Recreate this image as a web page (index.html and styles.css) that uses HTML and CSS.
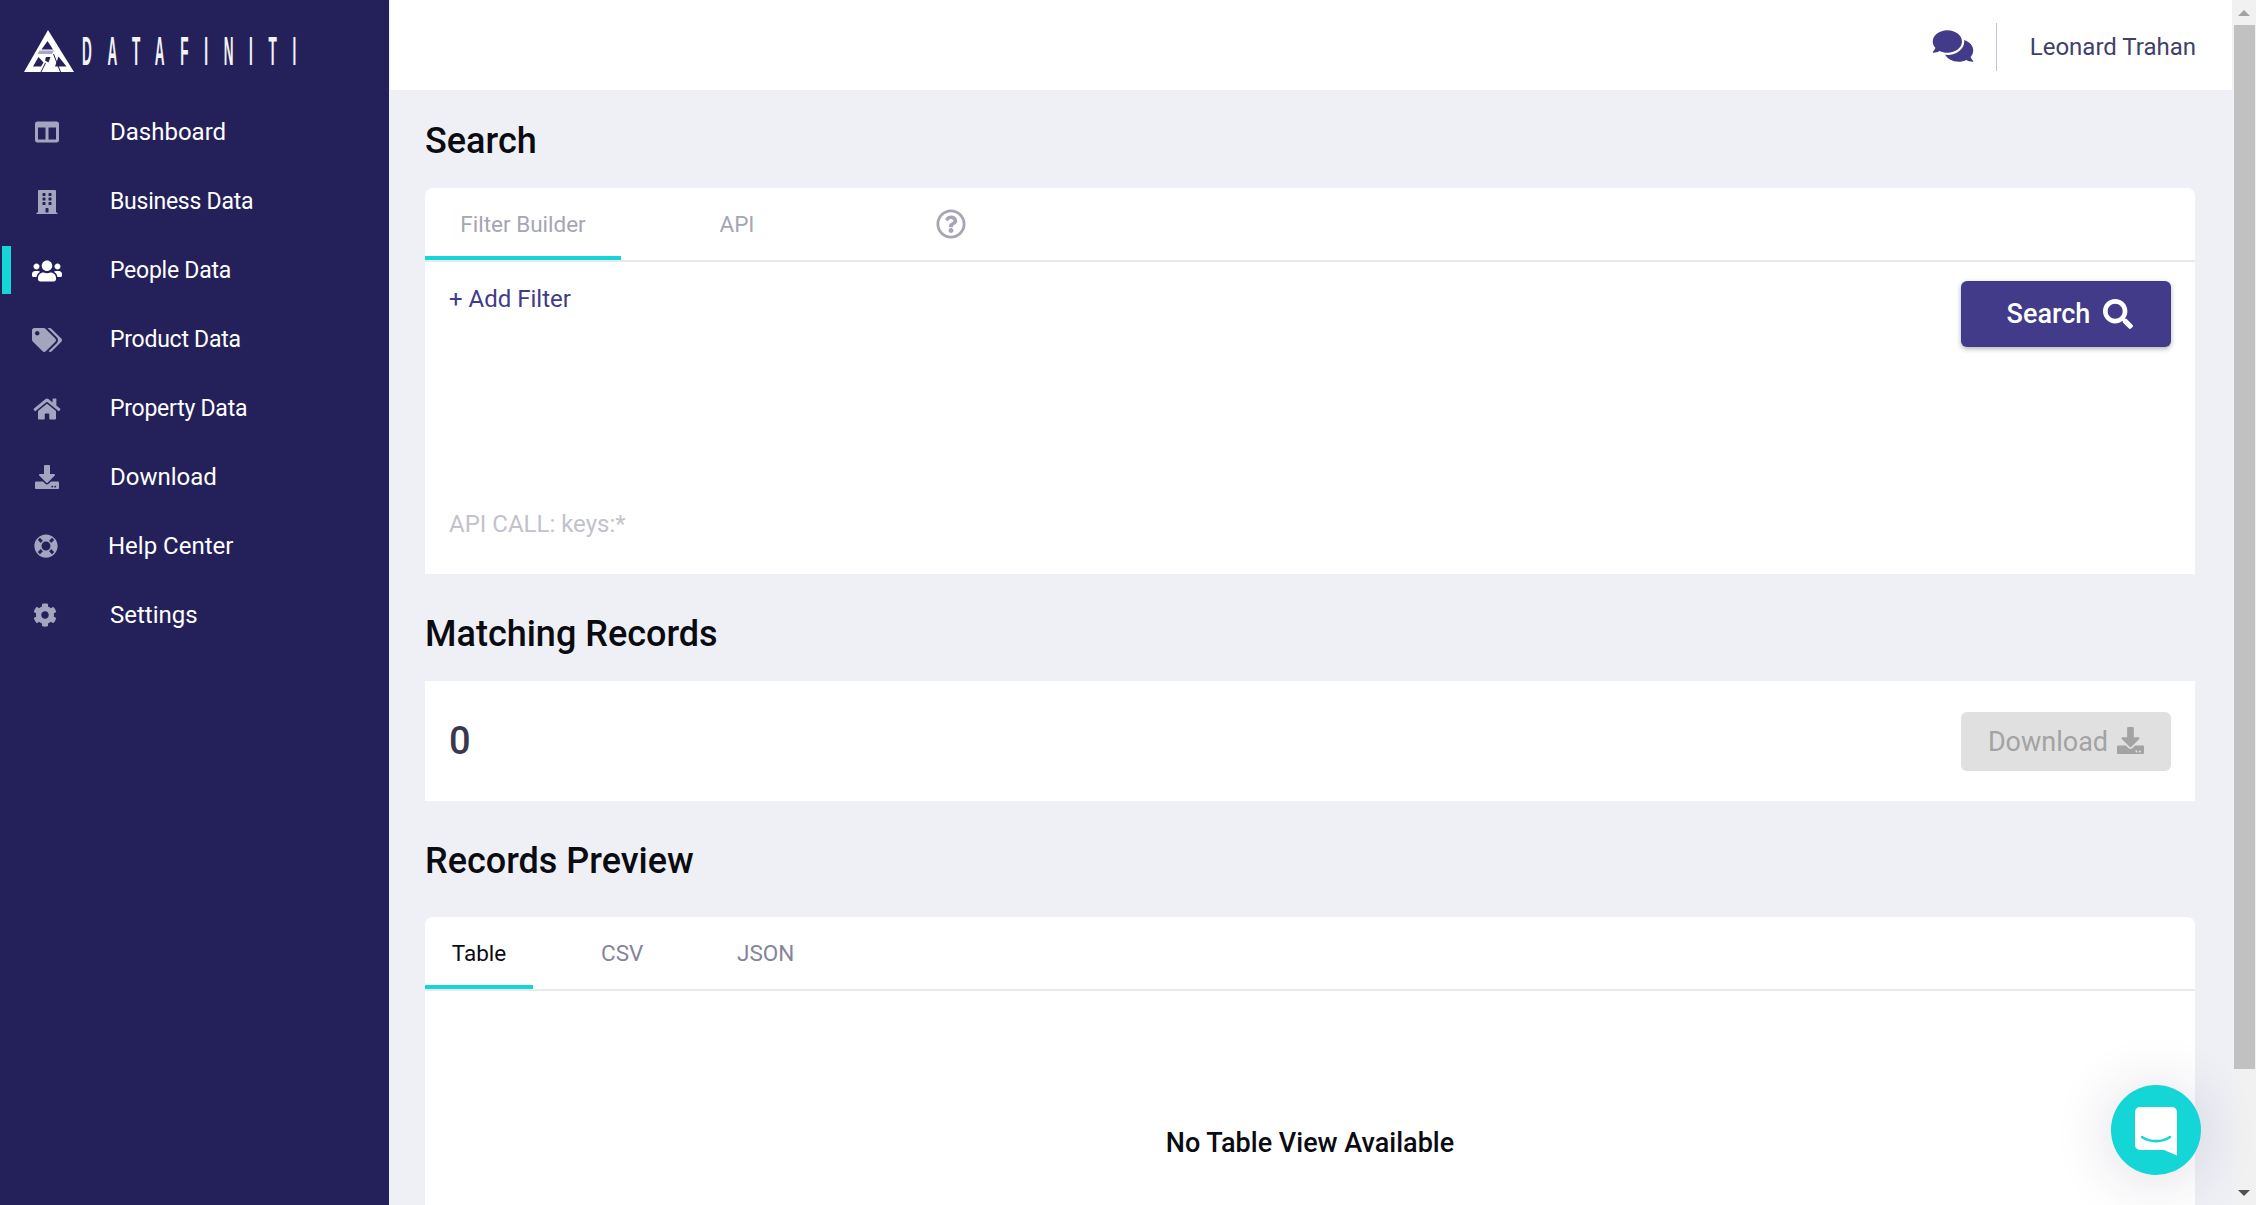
FILE: index.html
```html
<!DOCTYPE html>
<html lang="en">
<head>
    <meta charset="UTF-8">
    <meta name="viewport" content="width=device-width, initial-scale=1.0">
    <title>Datafiniti</title>
    <link rel="stylesheet" href="styles.css">
</head>
<body>
    <aside class="sidebar">
        <div class="logo">
            <svg class="logo-mark" viewBox="0 0 50 42">
                <path fill="#fff" fill-rule="evenodd" d="M24 0L50 42H0zM23.5 11L17.5 19.5H29zM14.5 27L9 36.5H17L19.5 32.5zM34.5 26.5L31 36.5H42.5zM22 27L21 30.5L24.5 32.5L26.5 27z"/>
                <path fill="#a9a8c4" d="M15.5 20.5H30L28 24H13.5z"/>
                <path fill="none" stroke="#24215a" stroke-width="1" d="M17 42L21.5 33M29.5 24L36.5 42"/>
            </svg>
            <span class="logo-text">DATAFINITI</span>
        </div>
        <nav class="nav">
            <a class="nav-item"><svg class="nav-icon" viewBox="0 0 512 512"><path d="M464 32H48C21.49 32 0 53.49 0 80v352c0 26.51 21.49 48 48 48h416c26.51 0 48-21.49 48-48V80c0-26.51-21.49-48-48-48zM224 416H64V160h160v256zm224 0H288V160h160v256z"/></svg>Dashboard</a>
            <a class="nav-item nav-data"><svg class="nav-icon" viewBox="0 0 448 512"><path d="M436 480h-20V24c0-13.255-10.745-24-24-24H56C42.745 0 32 10.745 32 24v456H12c-6.627 0-12 5.373-12 12v20h448v-20c0-6.627-5.373-12-12-12zM128 76c0-6.627 5.373-12 12-12h40c6.627 0 12 5.373 12 12v40c0 6.627-5.373 12-12 12h-40c-6.627 0-12-5.373-12-12V76zm0 96c0-6.627 5.373-12 12-12h40c6.627 0 12 5.373 12 12v40c0 6.627-5.373 12-12 12h-40c-6.627 0-12-5.373-12-12v-40zm52 148h-40c-6.627 0-12-5.373-12-12v-40c0-6.627 5.373-12 12-12h40c6.627 0 12 5.373 12 12v40c0 6.627-5.373 12-12 12zm76 160h-64v-84c0-6.627 5.373-12 12-12h40c6.627 0 12 5.373 12 12v84zm64-172c0 6.627-5.373 12-12 12h-40c-6.627 0-12-5.373-12-12v-40c0-6.627 5.373-12 12-12h40c6.627 0 12 5.373 12 12v40zm0-96c0 6.627-5.373 12-12 12h-40c-6.627 0-12-5.373-12-12v-40c0-6.627 5.373-12 12-12h40c6.627 0 12 5.373 12 12v40zm0-96c0 6.627-5.373 12-12 12h-40c-6.627 0-12-5.373-12-12V76c0-6.627 5.373-12 12-12h40c6.627 0 12 5.373 12 12v40z"/></svg>Business Data</a>
            <a class="nav-item nav-data active"><svg class="nav-icon" viewBox="0 0 640 512"><path d="M96 224c35.3 0 64-28.7 64-64s-28.7-64-64-64-64 28.7-64 64 28.7 64 64 64zm448 0c35.3 0 64-28.7 64-64s-28.7-64-64-64-64 28.7-64 64 28.7 64 64 64zm32 32h-64c-17.6 0-33.5 7.1-45.1 18.6 40.3 22.1 68.9 62 75.1 109.4h66c17.7 0 32-14.3 32-32v-32c0-35.3-28.7-64-64-64zm-256 0c61.9 0 112-50.1 112-112S381.9 32 320 32 208 82.1 208 144s50.1 112 112 112zm76.8 32h-8.3c-20.8 10-43.9 16-68.5 16s-47.6-6-68.5-16h-8.3C179.6 288 128 339.6 128 403.2V432c0 26.5 21.5 48 48 48h288c26.5 0 48-21.5 48-48v-28.8c0-63.6-51.6-115.2-115.2-115.2zm-223.7-13.4C161.5 263.1 145.6 256 128 256H64c-35.3 0-64 28.7-64 64v32c0 17.7 14.3 32 32 32h65.9c6.3-47.4 34.9-87.3 75.2-109.4z"/></svg>People Data</a>
            <a class="nav-item nav-data"><svg class="nav-icon" viewBox="0 0 640 512"><path d="M497.941 225.941L286.059 14.059A48 48 0 0 0 252.118 0H48C21.49 0 0 21.49 0 48v204.118a48 48 0 0 0 14.059 33.941l211.882 211.882c18.744 18.745 49.136 18.746 67.882 0l204.118-204.118c18.745-18.745 18.745-49.137 0-67.882zM112 160c-26.51 0-48-21.49-48-48s21.49-48 48-48 48 21.49 48 48-21.49 48-48 48zm513.941 133.823L421.823 497.941c-18.745 18.745-49.137 18.745-67.882 0l-.36-.36L527.64 323.522c16.999-16.999 26.36-39.6 26.36-63.64s-9.362-46.641-26.36-63.64L331.397 0h48.721a48 48 0 0 1 33.941 14.059l211.882 211.882c18.745 18.745 18.745 49.137 0 67.882z"/></svg>Product Data</a>
            <a class="nav-item nav-data"><svg class="nav-icon" viewBox="0 0 576 512"><path d="M280.37 148.26L96 300.11V464a16 16 0 0 0 16 16l112.06-.29a16 16 0 0 0 15.92-16V368a16 16 0 0 1 16-16h64a16 16 0 0 1 16 16v95.64a16 16 0 0 0 16 16.05L464 480a16 16 0 0 0 16-16V300L295.67 148.26a12.19 12.19 0 0 0-15.3 0zM571.6 251.47L488 182.56V44.05a12 12 0 0 0-12-12h-56a12 12 0 0 0-12 12v72.61L318.47 43a48 48 0 0 0-61 0L4.34 251.47a12 12 0 0 0-1.6 16.9l25.5 31A12 12 0 0 0 45.15 301l235.22-193.74a12.19 12.19 0 0 1 15.3 0L530.9 301a12 12 0 0 0 16.9-1.6l25.5-31a12 12 0 0 0-1.7-16.93z"/></svg>Property Data</a>
            <a class="nav-item"><svg class="nav-icon" viewBox="0 0 512 512"><path d="M216 0h80c13.3 0 24 10.7 24 24v168h87.7c17.8 0 26.7 21.5 14.1 34.1L269.7 378.3c-7.5 7.5-19.8 7.5-27.3 0L90.1 226.1c-12.6-12.6-3.7-34.1 14.1-34.1H192V24c0-13.3 10.7-24 24-24zm296 376v112c0 13.3-10.7 24-24 24H24c-13.3 0-24-10.7-24-24V376c0-13.3 10.7-24 24-24h146.7l49 49c20.1 20.1 52.5 20.1 72.6 0l49-49H488c13.3 0 24 10.7 24 24zm-124 88c0-11-9-20-20-20s-20 9-20 20 9 20 20 20 20-9 20-20zm64 0c0-11-9-20-20-20s-20 9-20 20 9 20 20 20 20-9 20-20z"/></svg>Download</a>
            <a class="nav-item help"><svg class="nav-icon" viewBox="0 0 512 512"><path d="M256 8C119.033 8 8 119.033 8 256s111.033 248 248 248 248-111.033 248-248S392.967 8 256 8zm173.696 119.559l-63.399 63.399c-10.987-18.559-26.67-34.252-45.255-45.255l63.399-63.399a218.396 218.396 0 0 1 45.255 45.255zM256 352c-53.019 0-96-42.981-96-96s42.981-96 96-96 96 42.981 96 96-42.981 96-96 96zM127.559 82.304l63.399 63.399c-18.559 10.987-34.252 26.67-45.255 45.255l-63.399-63.399a218.372 218.372 0 0 1 45.255-45.255zM82.304 384.441l63.399-63.399c10.987 18.559 26.67 34.252 45.255 45.255l-63.399 63.399a218.396 218.396 0 0 1-45.255-45.255zm302.137 45.255l-63.399-63.399c18.559-10.987 34.252-26.67 45.255-45.255l63.399 63.399a218.403 218.403 0 0 1-45.255 45.255z"/></svg>Help Center</a>
            <a class="nav-item settings"><svg class="nav-icon" viewBox="0 0 512 512"><path d="M487.4 315.7l-42.6-24.6c4.3-23.2 4.3-47 0-70.2l42.6-24.6c4.9-2.8 7.1-8.6 5.5-14-11.1-35.6-30-67.8-54.7-94.6-3.8-4.1-10-5.1-14.8-2.3L380.8 110c-17.9-15.4-38.5-27.3-60.8-35.1V25.8c0-5.6-3.9-10.5-9.4-11.7-36.7-8.2-74.3-7.8-109.2 0-5.5 1.2-9.4 6.1-9.4 11.7V75c-22.2 7.9-42.8 19.8-60.8 35.1L88.7 85.5c-4.9-2.8-11-1.9-14.8 2.3-24.7 26.7-43.6 58.9-54.7 94.6-1.7 5.4.6 11.2 5.5 14L67.3 221c-4.3 23.2-4.3 47 0 70.2l-42.6 24.6c-4.9 2.8-7.1 8.6-5.5 14 11.1 35.6 30 67.8 54.7 94.6 3.8 4.1 10 5.1 14.8 2.3l42.6-24.6c17.9 15.4 38.5 27.3 60.8 35.1v49.2c0 5.6 3.9 10.5 9.4 11.7 36.7 8.2 74.3 7.8 109.2 0 5.5-1.2 9.4-6.1 9.4-11.7v-49.2c22.2-7.9 42.8-19.8 60.8-35.1l42.6 24.6c4.9 2.8 11 1.9 14.8-2.3 24.7-26.7 43.6-58.9 54.7-94.6 1.5-5.5-.7-11.3-5.6-14.1zM256 336c-44.1 0-80-35.9-80-80s35.9-80 80-80 80 35.9 80 80-35.9 80-80 80z"/></svg>Settings</a>
        </nav>
    </aside>

    <div class="main">
        <header class="topbar">
            <svg class="chat-icon" viewBox="0 0 576 512"><path d="M416 192c0-88.4-93.1-160-208-160S0 103.6 0 192c0 34.3 14.1 65.9 38 92-13.4 30.2-35.5 54.2-35.8 54.5-2.2 2.3-2.8 5.7-1.5 8.7S4.8 352 8 352c36.6 0 66.9-12.3 88.7-25 32.2 15.7 70.3 25 111.3 25 114.9 0 208-71.6 208-160zm122 220c23.9-26 38-57.7 38-92 0-66.9-53.5-124.2-129.3-148.1.9 6.6 1.3 13.3 1.3 20.1 0 105.9-107.7 192-240 192-10.8 0-21.3-.8-31.7-1.9C207.8 439.6 281.8 480 368 480c41 0 79.1-9.2 111.3-25 21.8 12.7 52.1 25 88.7 25 3.2 0 6.1-1.9 7.3-4.8 1.3-2.9.7-6.3-1.5-8.7-.3-.3-22.4-24.2-35.8-54.5z"/></svg>
            <div class="topbar-divider"></div>
            <span class="user-name">Leonard Trahan</span>
        </header>

        <main class="content">
            <h2 class="section-title title-search">Search</h2>
            <section class="card card-search">
                <div class="tabs">
                    <div class="tab tab-filter selected">Filter Builder</div>
                    <div class="tab tab-api">API</div>
                    <svg class="help-icon" viewBox="0 0 512 512"><path d="M256 8C119.043 8 8 119.083 8 256c0 136.997 111.043 248 248 248s248-111.003 248-248C504 119.083 392.957 8 256 8zm0 448c-110.532 0-200-89.431-200-200 0-110.495 89.472-200 200-200 110.491 0 200 89.471 200 200 0 110.53-89.431 200-200 200zm107.244-255.2c0 67.052-72.421 68.084-72.421 92.863V300c0 6.627-5.373 12-12 12h-45.647c-6.627 0-12-5.373-12-12v-8.659c0-35.745 27.1-50.034 47.579-61.516 17.561-9.845 28.324-16.541 28.324-29.579 0-17.246-21.999-28.693-39.784-28.693-23.189 0-33.894 10.977-48.942 29.969-4.057 5.12-11.46 6.071-16.666 2.124l-27.824-21.098c-5.107-3.872-6.251-11.066-2.644-16.363C184.846 131.491 214.94 112 261.794 112c49.071 0 101.45 38.304 101.45 88.8zM298 368c0 23.159-18.841 42-42 42s-42-18.841-42-42 18.841-42 42-42 42 18.841 42 42z"/></svg>
                </div>
                <div class="search-body">
                    <div class="filter-col">
                        <div class="add-filter">+ Add Filter</div>
                        <div class="api-call">API CALL: keys:*</div>
                    </div>
                    <button class="btn btn-search">Search
                        <svg class="btn-icon" viewBox="0 0 512 512"><path d="M505 442.7L405.3 343c-4.5-4.5-10.6-7-17-7H372c27.6-35.3 44-79.7 44-128C416 93.1 322.9 0 208 0S0 93.1 0 208s93.1 208 208 208c48.3 0 92.7-16.4 128-44v16.3c0 6.4 2.5 12.5 7 17l99.7 99.7c9.4 9.4 24.6 9.4 33.9 0l28.3-28.3c9.4-9.4 9.4-24.6.1-34zM208 336c-70.7 0-128-57.2-128-128 0-70.7 57.2-128 128-128 70.7 0 128 57.2 128 128 0 70.7-57.2 128-128 128z"/></svg>
                    </button>
                </div>
            </section>

            <h2 class="section-title title-matching">Matching Records</h2>
            <section class="card card-matching">
                <div class="record-count">0</div>
                <button class="btn btn-download">Download
                    <svg class="btn-icon" viewBox="0 0 512 512"><path d="M216 0h80c13.3 0 24 10.7 24 24v168h87.7c17.8 0 26.7 21.5 14.1 34.1L269.7 378.3c-7.5 7.5-19.8 7.5-27.3 0L90.1 226.1c-12.6-12.6-3.7-34.1 14.1-34.1H192V24c0-13.3 10.7-24 24-24zm296 376v112c0 13.3-10.7 24-24 24H24c-13.3 0-24-10.7-24-24V376c0-13.3 10.7-24 24-24h146.7l49 49c20.1 20.1 52.5 20.1 72.6 0l49-49H488c13.3 0 24 10.7 24 24zm-124 88c0-11-9-20-20-20s-20 9-20 20 9 20 20 20 20-9 20-20zm64 0c0-11-9-20-20-20s-20 9-20 20 9 20 20 20 20-9 20-20z"/></svg>
                </button>
            </section>

            <h2 class="section-title title-preview">Records Preview</h2>
            <section class="card card-preview">
                <div class="tabs tabs-preview">
                    <div class="tab tab-table selected">Table</div>
                    <div class="tab tab-csv">CSV</div>
                    <div class="tab tab-json">JSON</div>
                </div>
                <div class="empty-view">No Table View Available</div>
            </section>
        </main>
    </div>

    <div class="scrollbar">
        <div class="arrow-up"></div>
        <div class="scroll-thumb"></div>
        <div class="arrow-down"></div>
    </div>

    <div class="launcher">
        <svg viewBox="0 0 42 49" class="launcher-icon">
            <path fill="#fff" d="M5 0h32a5 5 0 0 1 5 5v43.5L29 43H5a5 5 0 0 1-5-5V5a5 5 0 0 1 5-5z"/>
            <path fill="none" stroke="#14d6d6" stroke-width="2.6" stroke-linecap="round" d="M7 30c8 5.5 20 5.5 28 0"/>
        </svg>
    </div>
</body>
</html>
```

FILE: styles.css
```css
* {
    box-sizing: border-box;
}

html, body {
    height: 100%;
}

body {
    margin: 0;
    display: flex;
    height: 1205px;
    overflow: hidden;
    background-color: #eff0f5;
    font-family: Roboto, "Liberation Sans", sans-serif;
    color: #0b0b12;
}

/* Sidebar */
.sidebar {
    width: 389px;
    flex-shrink: 0;
    background-color: #24215a;
}

.logo {
    height: 97px;
    padding: 30px 0 0 24px;
    display: flex;
    align-items: flex-start;
}

.logo-mark {
    width: 50px;
    height: 42px;
    flex-shrink: 0;
}

.logo-text {
    display: block;
    margin: -2px 0 0 8px;
    font-family: "Liberation Sans", sans-serif;
    font-weight: bold;
    font-size: 41px;
    line-height: 46px;
    letter-spacing: 47.5px;
    color: #f2f2f7;
    transform: scaleX(0.33);
    transform-origin: left top;
    white-space: nowrap;
}

.nav {
    display: flex;
    flex-direction: column;
}

.nav-item {
    position: relative;
    height: 69px;
    display: flex;
    align-items: center;
    font-size: 24px;
    color: #fff;
}

.nav-data {
    padding-top: 2px;
    font-size: 23px;
    letter-spacing: -0.25px;
}

.nav-icon {
    width: 30px;
    height: 24px;
    margin: 0 48px 0 32px;
    fill: #a5a4bf;
}

.nav-item.help .nav-icon {
    margin: 0 47px 0 31px;
}

.nav-item.settings .nav-icon {
    margin: 0 50px 0 30px;
}

.nav-item.active .nav-icon {
    fill: #fff;
}

.nav-item.active::before {
    content: "";
    position: absolute;
    left: 2px;
    top: 11px;
    width: 9px;
    height: 48px;
    background-color: #14d6d6;
}

/* Main column */
.main {
    flex: 1;
    min-width: 0;
    margin-left: 1px;
}

.topbar {
    height: 90px;
    padding: 4px 36px 0 0;
    background-color: #fff;
    display: flex;
    align-items: center;
    justify-content: flex-end;
}

.chat-icon {
    width: 42px;
    height: 36px;
    margin-top: -2px;
    fill: #413b89;
}

.topbar-divider {
    width: 1px;
    height: 48px;
    margin: 0 33px 0 22px;
    background-color: #c4c3d3;
}

.user-name {
    font-size: 24px;
    color: #413f6b;
}

.content {
    padding: 0 37px 0 35px;
}

.section-title {
    margin: 0;
    font-size: 36px;
    line-height: 48px;
    font-weight: 500;
    color: #0b0b12;
}

.title-search {
    padding-top: 27px;
    height: 74px;
    margin-bottom: 24px;
}

.title-matching {
    margin: 36px 0 23px;
}

.title-preview {
    margin: 36px 0 32px;
}

.card {
    background-color: #fff;
}

.card-search {
    height: 386px;
    border-radius: 8px 8px 0 0;
}

.tabs {
    height: 74px;
    display: flex;
    align-items: center;
    border-bottom: 2px solid #e9e9ec;
}

.tab {
    height: 72px;
    line-height: 72px;
    font-size: 22.5px;
    border-bottom: 4px solid transparent;
    text-align: center;
    color: #a6a5b5;
}

.tab.selected {
    border-bottom-color: #14d6d6;
}

.tab-filter {
    width: 196px;
}

.tab-api {
    width: 232px;
}

.help-icon {
    width: 30px;
    height: 30px;
    margin-left: 83px;
    fill: #a6a5b5;
}

.search-body {
    display: flex;
    justify-content: space-between;
    align-items: flex-start;
    padding: 19px 24px 0 24px;
}

.add-filter {
    font-size: 24px;
    line-height: 28px;
    margin-top: 4px;
    color: #413b89;
}

.api-call {
    margin-top: 197px;
    font-size: 24px;
    line-height: 28px;
    color: #c2c2cc;
}

.btn {
    width: 210px;
    border: none;
    border-radius: 6px;
    display: flex;
    align-items: center;
    justify-content: center;
    font-family: inherit;
    cursor: pointer;
}

.btn-search {
    height: 66px;
    padding-left: 14px;
    font-size: 27px;
    font-weight: 500;
    color: #fff;
    background-color: #413b89;
    box-shadow: 0 2px 5px rgba(0, 0, 0, 0.3);
}

.btn-download {
    height: 59px;
    padding-top: 2px;
    font-size: 27px;
    color: #a3a3a3;
    background-color: #e0e0e0;
}

.btn-icon {
    width: 30px;
    height: 30px;
    margin-left: 13px;
    fill: currentColor;
}

.btn-download .btn-icon {
    width: 27px;
    height: 27px;
    margin: -3px 0 0 9px;
}

.card-matching {
    height: 120px;
    display: flex;
    align-items: center;
    justify-content: space-between;
    padding: 0 24px;
}

.record-count {
    font-size: 38px;
    font-weight: 500;
    color: #3a3850;
}

.card-preview {
    height: 400px;
    border-radius: 8px 8px 0 0;
}

.tabs-preview .tab {
    color: #85849a;
}

.tabs-preview .tab.selected {
    color: #0b0b12;
}

.tab-table {
    width: 108px;
}

.tab-csv {
    width: 136px;
    padding-left: 68px;
    text-align: left;
}

.tab-json {
    width: 140px;
    padding-left: 68px;
    text-align: left;
}

.empty-view {
    padding-top: 133px;
    text-align: center;
    font-size: 27px;
    line-height: 38px;
    font-weight: 500;
    color: #0b0b12;
}

/* Scrollbar */
.scrollbar {
    width: 24px;
    flex-shrink: 0;
    display: flex;
    flex-direction: column;
    align-items: center;
    background-color: #f1f1f1;
}

.arrow-up {
    margin-top: 10px;
    border-left: 6px solid transparent;
    border-right: 6px solid transparent;
    border-bottom: 6px solid #a3a3a3;
}

.scroll-thumb {
    width: 21px;
    height: 1044px;
    margin-top: 9px;
    background-color: #c1c1c1;
}

.arrow-down {
    margin-top: 121px;
    border-left: 6px solid transparent;
    border-right: 6px solid transparent;
    border-top: 6px solid #505050;
}

/* Chat launcher */
.launcher {
    position: fixed;
    left: 2111px;
    top: 1085px;
    width: 90px;
    height: 90px;
    border-radius: 50%;
    background-color: #14d6d6;
    display: flex;
    align-items: center;
    justify-content: center;
    box-shadow: 0 4px 60px rgba(40, 40, 90, 0.16);
}

.launcher-icon {
    width: 42px;
    height: 49px;
    margin-top: 2px;
}
```
